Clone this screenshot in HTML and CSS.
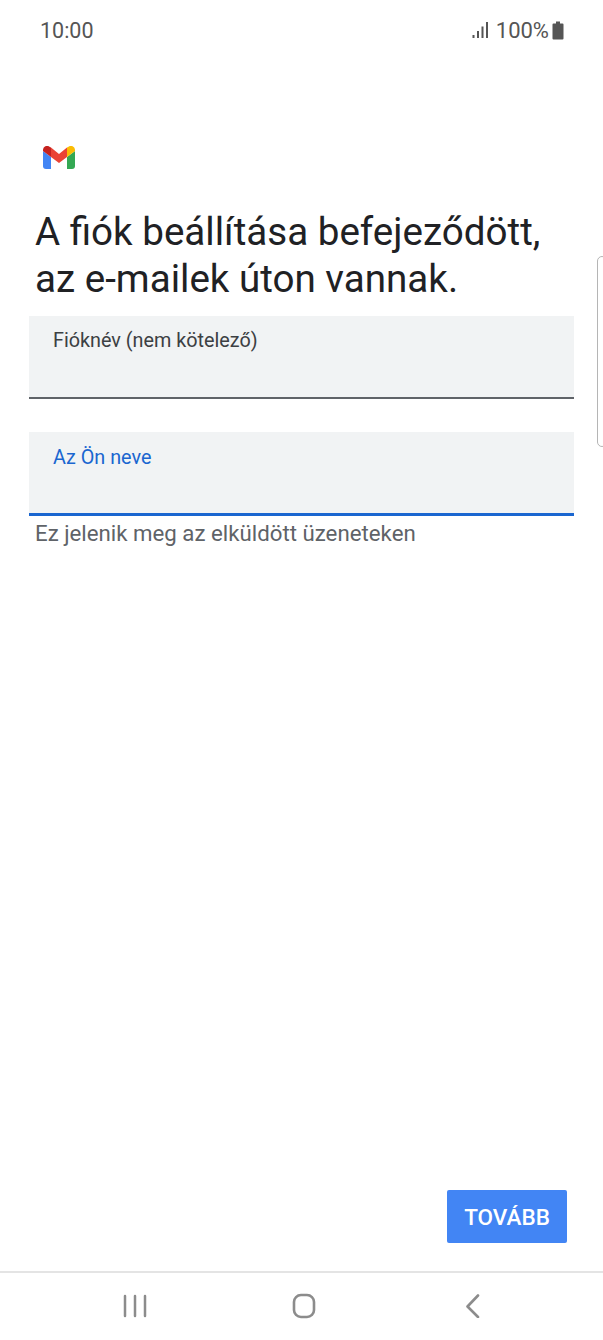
FILE: index.html
```html
<!DOCTYPE html>
<html lang="hu">
<head>
    <meta charset="UTF-8">
    <meta name="viewport" content="width=device-width, initial-scale=1.0">
    <title>Gmail</title>
    <link rel="stylesheet" href="styles.css">
</head>
<body>

<header class="status-bar">
    <span class="clock">10:00</span>
    <div class="status-icons">
        <svg class="signal" width="17" height="18" viewBox="0 0 17 18">
            <rect x="0.5" y="14" width="2" height="3" fill="#555"/>
            <rect x="5" y="10" width="2" height="7" fill="#555"/>
            <rect x="9.5" y="5.5" width="2" height="11.5" fill="#555"/>
            <rect x="14" y="1" width="2" height="16" fill="#555"/>
        </svg>
        <span class="battery-text">100%</span>
        <svg class="battery" width="12" height="19" viewBox="0 0 12 19">
            <path d="M4 0.5h4v2h2.5a1 1 0 0 1 1 1v14a1 1 0 0 1-1 1h-9a1 1 0 0 1-1-1v-14a1 1 0 0 1 1-1h2.5z" fill="#555"/>
        </svg>
    </div>
</header>

<main class="content">
    <svg class="logo" width="32" height="23" viewBox="0 0 32 23">
        <path d="M0 5v15a3 3 0 0 0 3 3h5V11z" fill="#4285f4"/>
        <path d="M24 11v12h5a3 3 0 0 0 3-3V5z" fill="#34a853"/>
        <path d="M24 1.5V11l8-6V4a4 4 0 0 0-6.5-3.2z" fill="#fbbc04"/>
        <path d="M8 11V1.5L16 8l8-6.5V11l-8 6z" fill="#ea4335"/>
        <path d="M0 4v1l8 6V1.5L6.5 0.8A4 4 0 0 0 0 4z" fill="#c5221f"/>
    </svg>

    <h1 class="title">A fiók beállítása befejeződött,<br>az e-mailek úton vannak.</h1>

    <div class="field">
        <label class="field-label">Fióknév (nem kötelező)</label>
    </div>

    <div class="field field-active">
        <label class="field-label">Az Ön neve</label>
    </div>
    <p class="helper">Ez jelenik meg az elküldött üzeneteken</p>

    <div class="actions">
        <button class="next-btn">TOVÁBB</button>
    </div>
</main>

<div class="edge-handle"></div>

<nav class="nav-bar">
    <svg width="24" height="24" viewBox="0 0 24 24">
        <path d="M2 2v20M12 2v20M22 2v20" stroke="#8c8c8c" stroke-width="2.5" stroke-linecap="round" fill="none"/>
    </svg>
    <svg width="24" height="26" viewBox="0 0 24 26">
        <rect x="2" y="2" width="20" height="22" rx="7" stroke="#8c8c8c" stroke-width="2.6" fill="none"/>
    </svg>
    <svg width="24" height="24" viewBox="0 0 24 24">
        <path d="M17 1.5L6.5 12.5 17 23" stroke="#8c8c8c" stroke-width="2.6" stroke-linecap="round" stroke-linejoin="round" fill="none"/>
    </svg>
</nav>

</body>
</html>
```

FILE: styles.css
```css
body {
    font-family: Roboto, "Noto Sans", sans-serif;
    margin: 0;
    background-color: #fff;
    display: flex;
    flex-direction: column;
    height: 1340px;
    overflow: hidden;
    position: relative;
}
.status-bar {
    display: flex;
    justify-content: space-between;
    align-items: center;
    height: 60px;
    padding: 0 39px 0 40px;
    box-sizing: border-box;
    color: #555;
    font-size: 21.5px;
}
.status-icons {
    display: flex;
    align-items: center;
    gap: 7px;
    font-size: 22px;
}
.status-icons .battery {
    margin-left: -4px;
}
.content {
    flex: 1;
    display: flex;
    flex-direction: column;
    padding: 86px 29px 28px;
}
.logo {
    margin-left: 14px;
    display: block;
}
.title {
    font-weight: 400;
    font-size: 38.6px;
    line-height: 47px;
    color: #202124;
    margin: 39px 0 0 6px;
}
.field {
    height: 83px;
    margin-top: 14px;
    background-color: #f1f3f4;
    border-bottom: 2px solid #5f6368;
    box-sizing: border-box;
    padding: 13px 24px;
}
.field + .field {
    height: 84px;
    margin-top: 33px;
    padding-top: 14px;
}
.field-label {
    font-size: 19.8px;
    line-height: 24px;
    color: #3c4043;
}
.field-active {
    border-bottom: 3px solid #1a66d0;
}
.field-active .field-label {
    color: #1a66d0;
}
.helper {
    margin: 4px 0 0 6px;
    font-size: 22.25px;
    line-height: 26px;
    color: #5f6368;
}
.actions {
    margin-top: auto;
    display: flex;
    justify-content: flex-end;
    padding-right: 7px;
}
.next-btn {
    width: 120px;
    height: 53px;
    background-color: #4285f4;
    color: white;
    border: none;
    border-radius: 2px;
    font-family: inherit;
    font-size: 22.5px;
    font-weight: 500;
}
.edge-handle {
    position: absolute;
    top: 256px;
    left: 597px;
    width: 10px;
    height: 191px;
    border: 1.5px solid #b5b5b5;
    border-radius: 8px;
    box-sizing: border-box;
}
.nav-bar {
    height: 69px;
    border-top: 2px solid #e4e4e4;
    box-sizing: border-box;
    display: flex;
    justify-content: space-between;
    align-items: center;
    padding: 0 118px 2px 123px;
}
```
